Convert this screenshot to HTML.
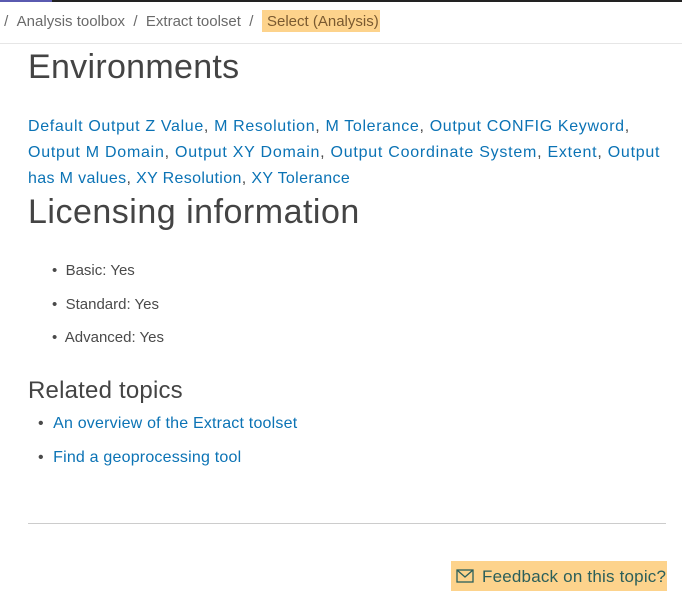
<!DOCTYPE html>
<html><head><style>
body{margin:0;width:682px;height:607px;background:#fff;font-family:"Liberation Sans",sans-serif;position:relative;overflow:hidden;color:#4a4a4a}
.a{position:absolute;white-space:nowrap}
a{color:#0b73b5;text-decoration:none}
</style></head><body>
<div class="a" style="left:0;top:0;width:682px;height:2px;background:#222"></div>
<div class="a" style="left:0;top:0;width:52px;height:2px;background:#5a5ab0"></div>
<div class="a" style="left:0;top:12px;font-size:15px;color:#6a6a6a;line-height:20px">&nbsp;/ &nbsp;Analysis toolbox &nbsp;/ &nbsp;Extract toolset &nbsp;/ </div>
<div class="a" style="left:262px;top:10px;width:118px;height:22px;background:#fdd38c"></div>
<div class="a" style="left:267px;top:12px;font-size:15px;color:#7a5a30;line-height:20px">Select (Analysis)</div>
<div class="a" style="left:0;top:43px;width:682px;height:1px;background:#e6e6e6"></div>
<div class="a" style="left:28px;top:46px;font-size:34px;color:#444;line-height:42px;letter-spacing:0.3px">Environments</div>
<div class="a" style="left:28px;top:114px;font-size:16px;line-height:26px"><div style="letter-spacing:0.65px"><a>Default Output Z Value</a>, <a>M Resolution</a>, <a>M Tolerance</a>, <a>Output CONFIG Keyword</a>,</div><div style="letter-spacing:0.75px"><a>Output M Domain</a>, <a>Output XY Domain</a>, <a>Output Coordinate System</a>, <a>Extent</a>, <a>Output</a></div><div style="letter-spacing:0.35px"><a>has M values</a>, <a>XY Resolution</a>, <a>XY Tolerance</a></div></div>
<div class="a" style="left:28px;top:191px;font-size:34px;color:#444;line-height:42px;letter-spacing:0.5px">Licensing information</div>
<div class="a" style="left:52px;top:261px;font-size:15px;line-height:20px">•&nbsp; Basic: Yes</div>
<div class="a" style="left:52px;top:295px;font-size:15px;line-height:20px">•&nbsp; Standard: Yes</div>
<div class="a" style="left:52px;top:328px;font-size:15px;line-height:20px">•&nbsp; Advanced: Yes</div>
<div class="a" style="left:28px;top:376px;font-size:24px;color:#444;line-height:30px;letter-spacing:0.2px">Related topics</div>
<div class="a" style="left:38px;top:414px;font-size:16px;line-height:20px;letter-spacing:0.2px">•&nbsp;&nbsp;<a>An overview of the Extract toolset</a></div>
<div class="a" style="left:38px;top:448px;font-size:16px;line-height:20px;letter-spacing:0.2px">•&nbsp;&nbsp;<a>Find a geoprocessing tool</a></div>
<div class="a" style="left:28px;top:523px;width:638px;height:1px;background:#ccc"></div>
<div class="a" style="left:451px;top:561px;width:216px;height:30px;background:#fdd38c"></div>
<svg class="a" style="left:456px;top:569px" width="18" height="14" viewBox="0 0 18 14"><rect x="1" y="1" width="16" height="12" fill="none" stroke="#2b5f5a" stroke-width="1.3"/><path d="M1 1 L9 8 L17 1" fill="none" stroke="#2b5f5a" stroke-width="1.3"/></svg>
<div class="a" style="left:482px;top:566px;font-size:17px;color:#2b5f5a;line-height:22px;letter-spacing:0.2px">Feedback on this topic?</div>
</body></html>
